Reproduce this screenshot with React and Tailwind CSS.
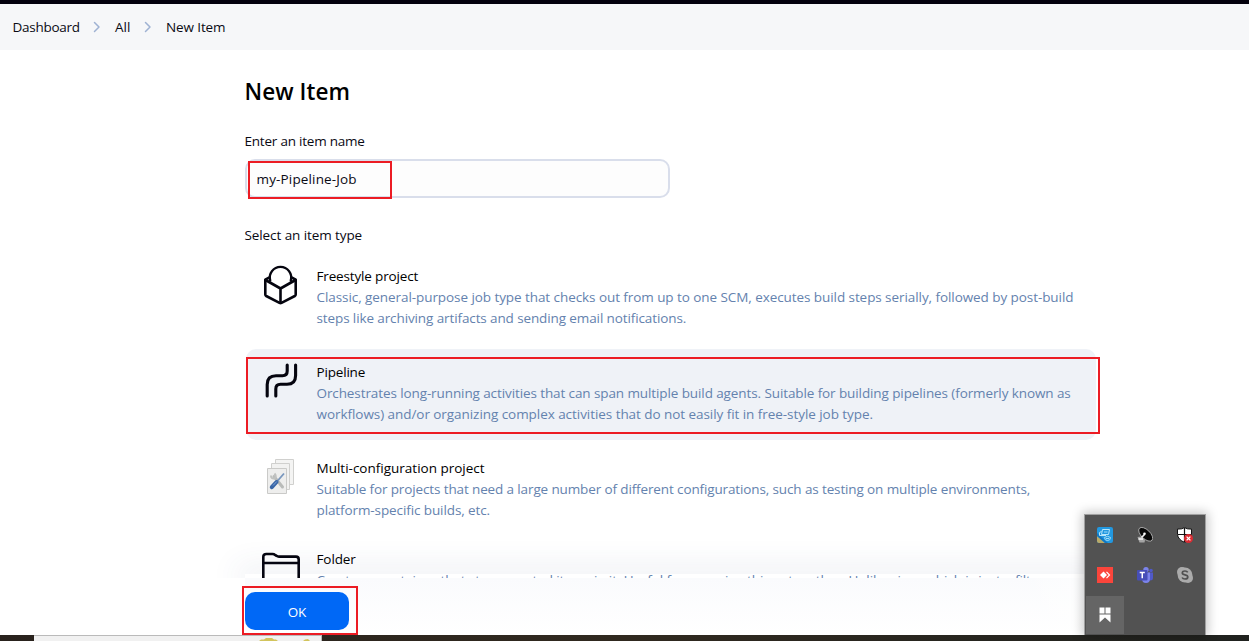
import React from "react";

const FreestyleIcon = () => (
  <svg width="35" height="40" viewBox="0 0 35 40" fill="none" stroke="#05050f" strokeWidth="2.6" strokeLinejoin="round" strokeLinecap="round">
    <path d="M7.200 15.500A10.700 10.700 0 1 1 27.800 15.500" strokeWidth="2.400" />
    <path d="M6.500 12.300L2.300 14.700V29.500Q2.300 30.500 3.200 31L16.500 37.800Q17.500 38.300 18.500 37.800L31.800 31Q32.700 30.500 32.700 29.500V14.700L28.500 12.300" />
    <path d="M2.500 15L17.500 23.500L32.500 15M17.500 23.500V38" />
  </svg>
);

const PipelineIcon = () => (
  <svg width="36" height="38" viewBox="0 0 36 38" fill="none" stroke="#05050f" strokeWidth="3.1" strokeLinecap="round">
    <path d="M4.200 34V22.500Q4.200 13.700 13 13.700H19.500Q24.200 13.700 24.200 9V3" />
    <path d="M12.800 34V27Q12.800 22.300 17.500 22.300H24Q32.600 22.300 32.600 13.500V3" />
  </svg>
);

const MatrixIcon = () => (
  <svg width="30" height="38" viewBox="0 0 30 38" fill="none">
    <path d="M9.500 1.500H27.500V26.500H9.500Z" fill="#f4f4f3" stroke="#d0d0ce" />
    <path d="M5.500 5.500H23.500V31.500H5.500Z" fill="#f2f2f1" stroke="#d0d0ce" />
    <path d="M1.500 10.500H20.500V35.500H1.500Z" fill="#eeeeed" stroke="#cacac8" />
    <path d="M8 18.500L16.500 29" stroke="#b9bbb9" strokeWidth="3" strokeLinecap="round" />
    <path d="M5 17.500Q5 21 8.500 20.500Q11 18.500 8.500 15.500" stroke="#c0c2c0" strokeWidth="2" />
    <path d="M18 15.500L11 23.500" stroke="#7896bd" strokeWidth="1.800" />
    <path d="M10.500 24L5.800 29.200" stroke="#3966a7" strokeWidth="4" strokeLinecap="round" />
    <path d="M10.800 23.500L7 27.500" stroke="#7da1d4" strokeWidth="1" />
  </svg>
);

const FolderIcon = () => (
  <svg width="40" height="34" viewBox="0 0 40 34" fill="none" stroke="#05050f" strokeWidth="2.600">
    <path d="M2.300 34V5Q2.300 2 5.300 2H11.500Q13 2 14.500 3.200L15.500 3.800Q16.500 4.600 18 4.600H35Q37.700 4.600 37.700 7.400V34" />
    <path d="M2.300 11H37.700" strokeWidth="2.300" />
  </svg>
);

const Chevron = () => (
  <svg width="8" height="12" viewBox="0 0 8 12" fill="none" stroke="#9fb2d3" strokeWidth="1.500" strokeLinecap="round" strokeLinejoin="round">
    <path d="M1.500 1.500L6 6L1.500 10.500" />
  </svg>
);

function Item({ icon, title, lines, className = "", titleClass = "", iconClass = "pt-[12px]" }) {
  return (
    <li className={`flex h-[91px] w-[850px] rounded-[10px] ${className}`}>
      <div className={`flex w-[70.5px] shrink-0 justify-center pr-px ${iconClass}`}>{icon}</div>
      <div className="pt-[13px] leading-[21px] whitespace-nowrap">
        <div className={`text-black ${titleClass}`}>{title}</div>
        {lines.map(([text, tracking]) => (
          <div key={text} className={`text-[#6482ae] ${tracking}`}>{text}</div>
        ))}
      </div>
    </li>
  );
}

const AppTile = () => (
  <svg width="16" height="16" viewBox="0 0 16 16">
    <rect width="16" height="16" rx="2" fill="#2298e0" />
    <path d="M0 9L8 16H2Q0 16 0 14Z" fill="#b9a968" />
    <path d="M0 6L11 16H8L0 9Z" fill="#1277c2" />
    <path d="M5.500 2.500H12.500L11.500 7.500H4.500ZM2.500 5.500L4.500 4.500M2.500 5.500V8.500H9" fill="none" stroke="#b5e5fb" />
    <path d="M7.500 10.500Q10.500 8 13.500 10.500Q13.500 13.500 10.500 13.500Q7.500 13.500 7.500 10.500ZM9 11.500H12M7 5H10.500" fill="none" stroke="#9fdcf8" />
  </svg>
);

const DishIcon = () => (
  <svg width="16" height="16" viewBox="0 0 16 16">
    <path d="M.5 10L4 9.500L8 13L7.500 15.500H2.500Z" fill="#a5a5a5" />
    <ellipse cx="8.700" cy="7.300" rx="8.700" ry="4.500" transform="rotate(44 8.700 7.300)" fill="#080808" stroke="#bebebe" strokeWidth=".8" />
    <path d="M4.500 10.500L7.500 7.500M1.500 12H6" stroke="#f3f3f3" strokeWidth="1.600" />
    <circle cx="7.500" cy="6.800" r="1.300" fill="#fff" />
  </svg>
);

const ShieldIcon = () => (
  <svg width="16" height="16" viewBox="0 0 16 16">
    <path d="M7.500.6Q10 2.300 14.500 2.100V7.500Q14 12.500 7.500 15.400Q1 12.500.5 7.500V2.100Q5 2.300 7.500.6Z" fill="#fff" stroke="#111" />
    <path d="M7.500 1V15M1 7.500H14" stroke="#111" strokeWidth="1.200" />
    <circle cx="11.500" cy="11.500" r="4.500" fill="#dc2b32" />
    <path d="M9.600 9.600L13.400 13.400M13.400 9.600L9.600 13.400" stroke="#fff" strokeWidth="1.300" />
  </svg>
);

const AnyDeskIcon = () => (
  <svg width="16" height="16" viewBox="0 0 16 16">
    <rect width="16" height="16" fill="#fb453b" />
    <path d="M6.500 4.500L10 8L6.500 11.500L3 8Z" fill="#fff" />
    <path d="M9.500 4.900L12.500 8L9.500 11.100" fill="none" stroke="#fff" strokeWidth="1.200" />
  </svg>
);

const TeamsIcon = () => (
  <svg width="16" height="16" viewBox="0 0 16 16">
    <circle cx="9" cy="2.700" r="2.700" fill="#7b83eb" />
    <circle cx="14" cy="3.500" r="1.800" fill="#5059c9" />
    <path d="M11 5.500H16V11Q16 13.500 13 13.500H11Z" fill="#5059c9" />
    <path d="M5 5.500H13V11.500Q13 16 9 16Q5 16 5 11.500Z" fill="#7b83eb" />
    <rect y="3" width="10.500" height="10.500" rx="1" fill="#464eb8" />
    <path d="M2.700 5.500H7.800M5.250 5.500V11.200" stroke="#fff" strokeWidth="1.500" />
  </svg>
);

const SkypeIcon = () => (
  <svg width="16" height="16" viewBox="0 0 16 16">
    <circle cx="5" cy="5" r="5" fill="#ababab" />
    <circle cx="11" cy="11" r="5" fill="#ababab" />
    <circle cx="8" cy="8" r="7.400" fill="#ababab" />
    <path d="M10.700 5.300Q10 4 8 4Q5.300 4 5.300 6Q5.300 7.400 8 7.900Q10.800 8.500 10.800 10Q10.800 12 8 12Q5.800 12 5.100 10.500" fill="none" stroke="#505050" strokeWidth="1.700" />
  </svg>
);

const BookmarkIcon = () => (
  <svg width="12" height="16" viewBox="0 0 12 16" fill="#fff">
    <path d="M.5.500H5.500V6.500H.500ZM6.500.500H11.500V6.500H6.500ZM.500 7.500H11.500V15.500L6 10.500L.500 15.500Z" />
  </svg>
);

const trayIcons = [AppTile, DishIcon, ShieldIcon, AnyDeskIcon, TeamsIcon, SkypeIcon];

function Tray() {
  return (
    <div className="absolute top-[514px] left-[1084px] h-[121px] w-[122px] border border-b-0 border-[#a0a0a0] bg-[#525252] shadow-[0_0_10px_2px_rgba(0,0,0,0.22)]">
      <div className="grid grid-cols-[40px_40px_40px] grid-rows-[40px_40px_40px]">
        {trayIcons.map((Icon, i) => (
          <div key={i} className="flex items-center justify-center">
            <Icon />
          </div>
        ))}
        <div className="mt-[1px] ml-[1px] flex h-[38px] w-[38px] items-center justify-center bg-[#656565]">
          <BookmarkIcon />
        </div>
      </div>
    </div>
  );
}

export default function App() {
  return (
    <div className="relative flex h-[641px] w-[1249px] flex-col overflow-hidden bg-white font-['Open_Sans','Noto_Sans',sans-serif] text-[13.5px] text-[#0a0a14]">
      <div className="h-1 shrink-0 bg-[#03000d]" />
      <nav className="flex h-[46px] shrink-0 items-center bg-[#f6f7f9] pl-[12.5px] whitespace-nowrap">
        <span className="w-[80.5px] tracking-[-0.27px]">Dashboard</span>
        <Chevron />
        <span className="ml-[14px] w-[29px]">All</span>
        <Chevron />
        <span className="ml-[14px] tracking-[-0.12px]">New Item</span>
      </nav>

      <main className="relative h-[528px] shrink-0 overflow-hidden pl-[244.5px]">
        <h1 className="mt-[26px] h-8 text-[22.5px] leading-8 font-semibold tracking-[0.08px] text-black">New Item</h1>
        <label className="mt-[23px] block h-[21px] leading-[21px] tracking-[-0.22px]">Enter an item name</label>
        <div className="mt-[7px] ml-[0.5px] flex h-[39px] w-[425px] items-center rounded-[10px] border-2 border-[#d9deeb] bg-[#fdfdfd] pt-[2px] pl-[9.5px] tracking-[0.15px]">my-Pipeline-Job</div>
        <div className="mt-[27px] h-[21px] leading-[21px] tracking-[-0.09px]">Select an item type</div>
        <ul className="mt-[7px] flex flex-col pl-[1.5px]">
          <Item
            icon={<FreestyleIcon />}
            title="Freestyle project"
            titleClass="tracking-[-0.16px]"
            lines={[
              ["Classic, general-purpose job type that checks out from up to one SCM, executes build steps serially, followed by post-build", "tracking-[-0.07px]"],
              ["steps like archiving artifacts and sending email notifications.", "tracking-[-0.11px]"],
            ]}
          />
          <Item
            className="mt-[5px] bg-[#eff2f7]"
            iconClass="pt-[13px]"
            icon={<PipelineIcon />}
            title="Pipeline"
            titleClass="tracking-[-0.18px]"
            lines={[
              ["Orchestrates long-running activities that can span multiple build agents. Suitable for building pipelines (formerly known as", "tracking-[-0.1px]"],
              ["workflows) and/or organizing complex activities that do not easily fit in free-style job type.", "tracking-[-0.055px]"],
            ]}
          />
          <Item
            className="mt-[5px]"
            iconClass="pt-[13px]"
            icon={<MatrixIcon />}
            title="Multi-configuration project"
            lines={[
              ["Suitable for projects that need a large number of different configurations, such as testing on multiple environments,", "tracking-[-0.125px]"],
              ["platform-specific builds, etc.", "tracking-[-0.1px]"],
            ]}
          />
          <Item
            iconClass="pt-[16px]"
            icon={<FolderIcon />}
            title="Folder"
            titleClass="tracking-[-0.1px]"
            lines={[["Creates a container that stores nested items in it. Useful for grouping things together. Unlike view, which is just a filter,", "tracking-[-0.1px]"]]}
          />
        </ul>
        <div className="pointer-events-none absolute bottom-0 left-[245px] h-1 w-[852px] shadow-[0_0_30px_8px_rgba(60,80,120,0.09)]" />
      </main>

      <div className="flex h-[57px] shrink-0 bg-linear-to-b from-[#fafbfd] to-white">
        <div className="w-[245px] bg-white" />
        <button className="mt-[14px] h-[38px] w-[104px] rounded-[10px] bg-[#0068f6] pt-[2px] text-[13.5px] tracking-[-0.2px] text-white">OK</button>
        <div className="ml-auto w-[100px] bg-linear-to-r from-white/0 to-white" />
        <div className="w-[125px] bg-white" />
      </div>

      <footer className="flex h-[6px] shrink-0 bg-linear-to-r from-[#29221d] via-[#30291f] to-[#20221f] pl-[34px]">
        <div className="flex w-[288px] justify-end border-t border-r border-[#bababa] bg-[#f1f1f1] pr-[9px]">
          <svg width="54" height="5" viewBox="0 0 54 5" fill="#d2c45c">
            <path d="M1 5L3 3.500L6 3.500L8 2H14L16 3.500H18L20 5ZM45 5L47 3.500L50 3L52 5Z" />
          </svg>
        </div>
      </footer>

      <div className="absolute top-[161px] left-[248px] h-[38px] w-[144px] border-2 border-[#ec1c24]" />
      <div className="absolute top-[357px] left-[246px] h-[77px] w-[854px] border-2 border-[#ec1c24]" />
      <div className="absolute top-[586px] left-[242px] h-[49px] w-[116px] border-2 border-[#ec1c24]" />
      <Tray />
    </div>
  );
}
